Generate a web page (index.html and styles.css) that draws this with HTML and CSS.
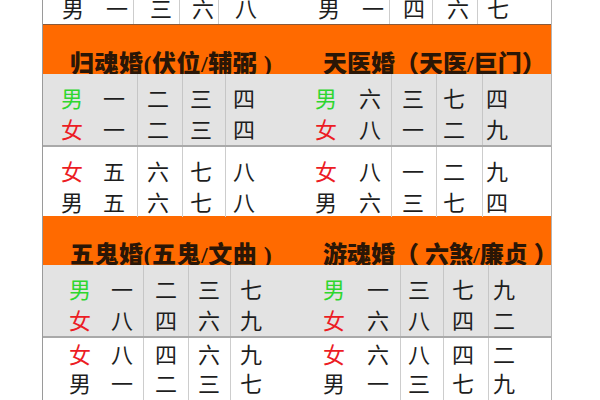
FILE: index.html
```html
<!DOCTYPE html>
<html lang="zh">
<head>
<meta charset="utf-8">
<link rel="stylesheet" href="styles.css">
</head>
<body>
<div class="sheet">
  <section class="sec sec-top">
    <div class="row white top">
      <div class="cell c1"><p><span>男</span><span>一</span></p></div>
      <div class="cell c2"><p><span>三</span></p></div>
      <div class="cell c3"><p><span>六</span></p></div>
      <div class="cell c4"><p><span>八</span><span>男</span><span>一</span></p></div>
      <div class="cell c5"><p><span>四</span></p></div>
      <div class="cell c6"><p><span>六</span></p></div>
      <div class="cell c7"><p><span>七</span></p></div>
    </div>
  </section>

  <div class="band">
    <div class="title tl">归魂婚(伏位/辅弼 )</div>
    <div class="title tr">天医婚（天医/巨门）</div>
  </div>

  <section class="sec sec-mid">
    <div class="row gray">
      <div class="cell c1"><p><span class="m">男</span><span>一</span></p><p><span class="f">女</span><span>一</span></p></div>
      <div class="cell c2"><p><span>二</span></p><p><span>二</span></p></div>
      <div class="cell c3"><p><span>三</span></p><p><span>三</span></p></div>
      <div class="cell c4"><p><span>四</span><span class="m">男</span><span>六</span></p><p><span>四</span><span class="f">女</span><span>八</span></p></div>
      <div class="cell c5"><p><span>三</span></p><p><span>一</span></p></div>
      <div class="cell c6"><p><span>七</span></p><p><span>二</span></p></div>
      <div class="cell c7"><p><span>四</span></p><p><span>九</span></p></div>
    </div>
    <div class="row white">
      <div class="cell c1"><p><span class="f">女</span><span>五</span></p><p><span>男</span><span>五</span></p></div>
      <div class="cell c2"><p><span>六</span></p><p><span>六</span></p></div>
      <div class="cell c3"><p><span>七</span></p><p><span>七</span></p></div>
      <div class="cell c4"><p><span>八</span><span class="f">女</span><span>八</span></p><p><span>八</span><span>男</span><span>六</span></p></div>
      <div class="cell c5"><p><span>一</span></p><p><span>三</span></p></div>
      <div class="cell c6"><p><span>二</span></p><p><span>七</span></p></div>
      <div class="cell c7"><p><span>九</span></p><p><span>四</span></p></div>
    </div>
  </section>

  <div class="band">
    <div class="title tl">五鬼婚(五鬼/文曲 )</div>
    <div class="title tr">游魂婚（ 六煞/廉贞 ）</div>
  </div>

  <section class="sec sec-bot">
    <div class="row gray">
      <div class="cell c1"><p><span class="m">男</span><span>一</span></p><p><span class="f">女</span><span>八</span></p></div>
      <div class="cell c2"><p><span>二</span></p><p><span>四</span></p></div>
      <div class="cell c3"><p><span>三</span></p><p><span>六</span></p></div>
      <div class="cell c4"><p><span>七</span><span class="m">男</span><span>一</span></p><p><span>九</span><span class="f">女</span><span>六</span></p></div>
      <div class="cell c5"><p><span>三</span></p><p><span>八</span></p></div>
      <div class="cell c6"><p><span>七</span></p><p><span>四</span></p></div>
      <div class="cell c7"><p><span>九</span></p><p><span>二</span></p></div>
    </div>
    <div class="row white last">
      <div class="cell c1"><p><span class="f">女</span><span>八</span></p><p><span>男</span><span>一</span></p></div>
      <div class="cell c2"><p><span>四</span></p><p><span>二</span></p></div>
      <div class="cell c3"><p><span>六</span></p><p><span>三</span></p></div>
      <div class="cell c4"><p><span>九</span><span class="f">女</span><span>六</span></p><p><span>七</span><span>男</span><span>一</span></p></div>
      <div class="cell c5"><p><span>八</span></p><p><span>三</span></p></div>
      <div class="cell c6"><p><span>四</span></p><p><span>七</span></p></div>
      <div class="cell c7"><p><span>二</span></p><p><span>九</span></p></div>
    </div>
  </section>
</div>
</body>
</html>
```

FILE: styles.css
```css
html, body {
  margin: 0;
  padding: 0;
  background: #ffffff;
}
body {
  width: 600px;
  height: 400px;
  overflow: hidden;
  font-family: "Noto Sans CJK SC", "Noto Sans", sans-serif;
  color: #1e1e1e;
}
.sheet {
  margin-left: 42px;
  width: 508px;
  border-left: 1px solid #9a9a9a;
  border-right: 1px solid #b4b4b4;
}
.sec-top {
  --cols: 90px 46px 39px 171px 43px 45px 74px;
  --p1: 19px; --p2: 16px; --p3: 12px; --p4: 16px; --p5: 13px; --p6: 14px; --p7: 9px;
  --g1: 22px; --g4a: 61px;
}
.sec-mid {
  --cols: 94px 45px 43px 166px 45px 46px 69px;
  --p1: 18px; --p2: 9px; --p3: 7px; --p4: 7px; --p5: 10px; --p6: 6px; --p7: 3px;
  --g1: 20px; --g4a: 60px;
}
.sec-bot {
  --cols: 100px 45px 42px 170px 43px 45px 63px;
  --p1: 26px; --p2: 11px; --p3: 9px; --p4: 9px; --p5: 7px; --p6: 8px; --p7: 4px;
  --g1: 20px; --g4a: 61px;
}
.row {
  display: grid;
  grid-template-columns: var(--cols);
  height: 71px;
  box-sizing: border-box;
  font-size: 22px;
  line-height: 31px;
}
.row.gray { background: #e3e3e3; }
.row.white { background: #ffffff; border-top: 2px solid #a9a9a9; }
.row.top {
  height: 25px;
  border-top: none;
  border-bottom: 1px solid #8a5a3a;
  line-height: 14px;
}
.row.last { line-height: 29px; }
.cell {
  box-sizing: border-box;
  padding-top: 8px;
  border-left: 1px solid #cdcdcd;
}
.row.gray .cell { border-left-color: #c6c6c6; }
.row.top .cell { padding-top: 0; }
.row.last .cell { padding-top: 1px; }
.cell.c1 { border-left: none; padding-left: var(--p1); }
.cell.c2 { padding-left: var(--p2); }
.cell.c3 { padding-left: var(--p3); }
.cell.c4 { padding-left: var(--p4); }
.cell.c5 { padding-left: var(--p5); }
.cell.c6 { padding-left: var(--p6); }
.cell.c7 { padding-left: var(--p7); }
.cell p {
  margin: 0;
  display: flex;
  white-space: nowrap;
}
.cell span {
  display: block;
  width: 22px;
  text-align: center;
  flex: none;
}
.c1 span + span { margin-left: var(--g1); }
.c4 span:nth-child(2) { margin-left: var(--g4a); }
.c4 span:nth-child(3) { margin-left: 22px; }
.m { color: #2fd62f; }
.f { color: #ec1c24; }

.band {
  display: grid;
  grid-template-columns: 257px 251px;
  height: 49px;
  background: #ff6a00;
  align-items: end;
  overflow: hidden;
}
.title {
  font-family: "Liberation Serif", "Noto Sans CJK SC", serif;
  font-weight: 900;
  font-size: 24px;
  line-height: 20px;
  color: #2a1606;
  white-space: nowrap;
  letter-spacing: 0.5px;
}
.title.tl { padding-left: 27px; }
.title.tr { padding-left: 23px; letter-spacing: 0; }
```
